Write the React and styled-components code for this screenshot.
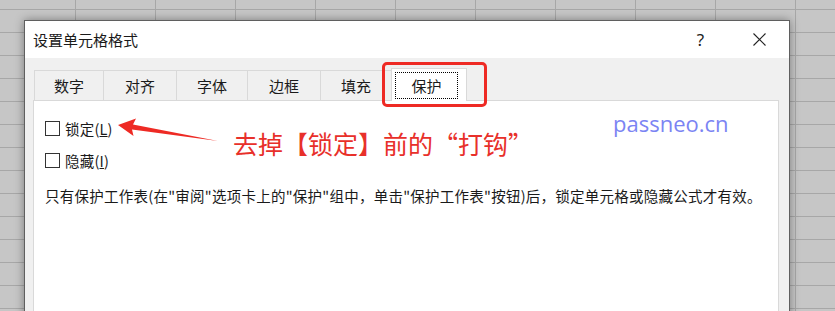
import React from 'react';
import styled, { createGlobalStyle } from 'styled-components';

const GlobalStyle = createGlobalStyle`
  html, body {
    margin: 0;
    padding: 0;
  }
  body {
    font-family: 'Noto Sans CJK SC', 'Noto Sans', sans-serif;
  }
`;

const Sheet = styled.div`
  width: 835px;
  height: 311px;
  overflow: hidden;
  background-color: #c6c6c6;
  background-image:
    linear-gradient(to right, #a7a7a7 1px, transparent 1px),
    linear-gradient(to bottom, #a7a7a7 1px, transparent 1px);
  background-size: 80px 23px;
  background-position: 75px 9px;
  padding: 20px 0 0 24px;
  box-sizing: border-box;
`;

const Dialog = styled.div`
  position: relative;
  width: 766px;
  height: 320px;
  box-sizing: border-box;
  border: 1px solid #5f5f5f;
  background: #f0f0f0;
  box-shadow: 0 0 9px rgba(0, 0, 0, 0.38);
  display: flex;
  flex-direction: column;
`;

const TitleBar = styled.div`
  height: 37px;
  background: #ffffff;
  display: flex;
  align-items: center;
  padding-left: 8px;
`;

const Title = styled.div`
  flex: 1;
  font-size: 15px;
  color: #1a1a1a;
`;

const TitleButton = styled.div`
  width: 59px;
  height: 37px;
  display: flex;
  align-items: center;
  justify-content: center;
  font-family: 'Noto Sans', sans-serif;
  font-size: 17px;
  color: #222;
`;

const Body = styled.div`
  flex: 1;
  padding: 10px 10px 0 8px;
  display: flex;
  flex-direction: column;
`;

const TabRow = styled.div`
  display: flex;
  align-items: flex-end;
  height: 32px;
  margin-left: 2px;
`;

const Tab = styled.div`
  position: relative;
  z-index: ${(p) => (p.$active ? 1 : 0)};
  width: ${(p) => p.$w}px;
  height: ${(p) => (p.$active ? 33 : 30)}px;
  margin-bottom: ${(p) => (p.$active ? -1 : 0)}px;
  box-sizing: border-box;
  border: 1px solid #d9d9d9;
  border-bottom: none;
  margin-left: -1px;
  background: ${(p) => (p.$active ? '#ffffff' : '#f0f0f0')};
  display: flex;
  align-items: ${(p) => (p.$active ? 'flex-start' : 'center')};
  justify-content: ${(p) => (p.$active ? 'flex-start' : 'center')};
  font-size: 15px;
  color: #1a1a1a;
  padding: ${(p) => (p.$active ? '3px 0 0 3px' : '0')};
`;

const FocusBox = styled.div`
  width: 63px;
  height: 27px;
  box-sizing: border-box;
  border: 1px dotted #000;
  display: flex;
  align-items: center;
  justify-content: center;
`;

const Panel = styled.div`
  flex: 1;
  background: #ffffff;
  border: 1px solid #d9d9d9;
  border-bottom: none;
  padding: 15px 0 0 11px;
  display: flex;
  flex-direction: column;
  gap: 8px;
`;

const CheckRow = styled.label`
  display: flex;
  align-items: center;
  height: 24px;
  gap: 5px;
  font-size: 14.5px;
  letter-spacing: 0.2px;
  color: #1a1a1a;
`;

const Box = styled.span`
  width: 15px;
  height: 15px;
  box-sizing: border-box;
  border: 1px solid #333;
  background: #fff;
`;

const Note = styled.div`
  margin-top: 5px;
  font-size: 14.5px;
  letter-spacing: 0.25px;
  line-height: 22px;
  color: #1a1a1a;
  white-space: nowrap;
`;

const Highlight = styled.div`
  position: absolute;
  left: 357px;
  top: 41px;
  width: 105px;
  height: 45px;
  box-sizing: border-box;
  border: 3.5px solid #ee2a24;
  border-radius: 5px;
`;

const Arrow = styled.svg`
  position: absolute;
  left: 85px;
  top: 89px;
`;

const Callout = styled.div`
  position: absolute;
  left: 208px;
  top: 105px;
  font-size: 25px;
  line-height: 35px;
  color: #e8302a;
  white-space: nowrap;
`;

const Watermark = styled.div`
  position: absolute;
  left: 588px;
  top: 87px;
  font-family: 'Open Sans', 'Noto Sans', sans-serif;
  font-size: 22px;
  line-height: 30px;
  color: #7b84f3;
`;

const tabs = [
  { label: '数字', w: 70 },
  { label: '对齐', w: 74 },
  { label: '字体', w: 72 },
  { label: '边框', w: 74 },
  { label: '填充', w: 72 },
];

export default function App() {
  return (
    <>
      <GlobalStyle />
      <Sheet>
        <Dialog>
          <TitleBar>
            <Title>设置单元格格式</Title>
            <TitleButton>?</TitleButton>
            <TitleButton>
              <svg width="13" height="13" viewBox="0 0 13 13">
                <path d="M0.5 0.5 L12.5 12.5 M12.5 0.5 L0.5 12.5" stroke="#222" strokeWidth="1.1" fill="none" />
              </svg>
            </TitleButton>
          </TitleBar>
          <Body>
            <TabRow>
              {tabs.map((t) => (
                <Tab key={t.label} $w={t.w}>{t.label}</Tab>
              ))}
              <Tab $active $w={76}>
                <FocusBox>保护</FocusBox>
              </Tab>
            </TabRow>
            <Panel>
              <CheckRow>
                <Box />
                <span>锁定(<u>L</u>)</span>
              </CheckRow>
              <CheckRow>
                <Box />
                <span>隐藏(<u>I</u>)</span>
              </CheckRow>
              <Note>
                只有保护工作表(在"审阅"选项卡上的"保护"组中，单击"保护工作表"按钮)后，锁定单元格或隐藏公式才有效。
              </Note>
            </Panel>
          </Body>
          <Highlight />
          <Arrow width="115" height="35" viewBox="0 0 115 35">
            <path d="M8 15 L26 8.5 L23 14.6 L108 31 L22 19.6 L23.5 26 Z" fill="#ee2a24" />
          </Arrow>
          <Callout>去掉【锁定】前的“打钩”</Callout>
          <Watermark>passneo.cn</Watermark>
        </Dialog>
      </Sheet>
    </>
  );
}
